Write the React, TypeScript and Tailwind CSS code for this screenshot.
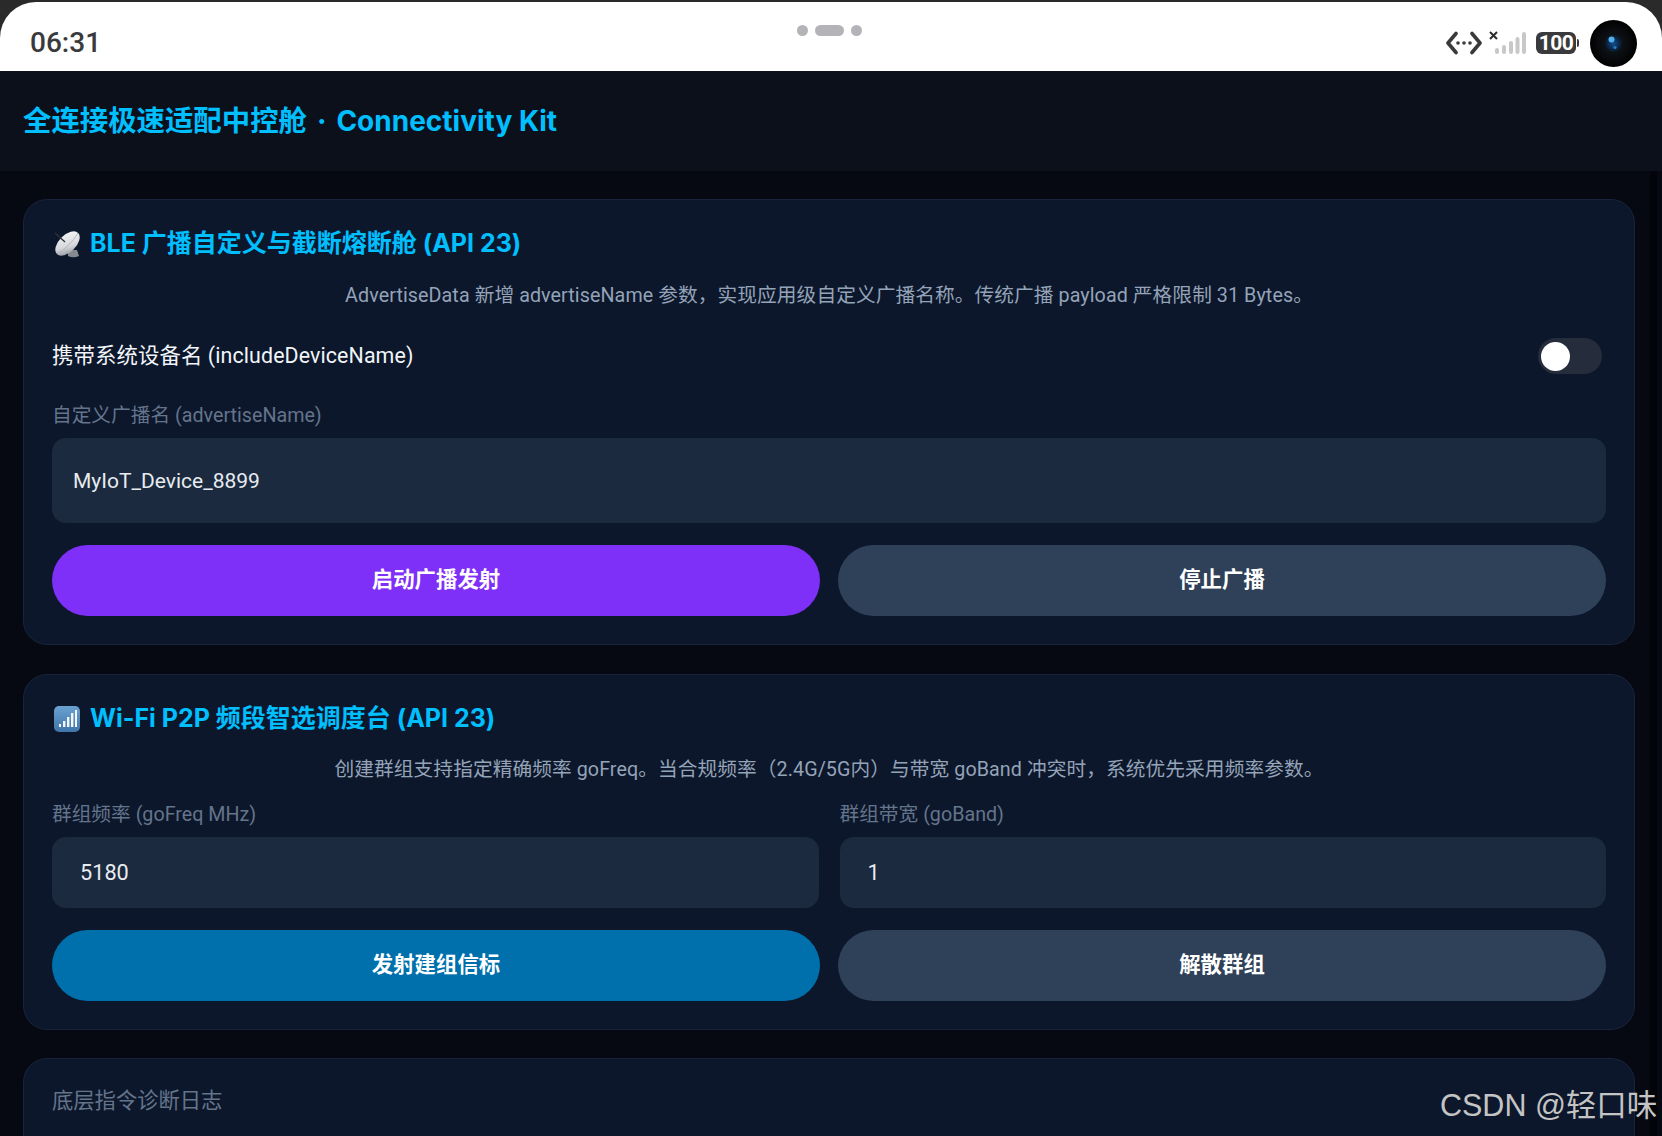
import { useState } from "react";

const uiFont = "font-['Roboto','Noto_Sans_CJK_SC',sans-serif]";
const headingFont = "font-['Inter','Noto_Sans_CJK_SC',sans-serif]";

function DishIcon() {
  return (
    <svg viewBox="0 0 28 28" className="h-[28px] w-[28px] shrink-0">
      <defs>
        <linearGradient id="dish" x1="0" y1="1" x2="1" y2="0">
          <stop offset="0" stopColor="#7f838a" />
          <stop offset="0.4" stopColor="#d6d8dc" />
          <stop offset="1" stopColor="#fbfbfb" />
        </linearGradient>
      </defs>
      <path d="M15 20 H24 L26 26 Q20.5 28.5 15 26 Z" fill="#858990" />
      <ellipse cx="14.5" cy="13.5" rx="15" ry="8.5" transform="rotate(-45 14.5 13.5)" fill="url(#dish)" />
      <path d="M4.5 23.5 C10 21 20 12 25 3" stroke="#a9acb2" strokeWidth="0.8" fill="none" />
      <path d="M2 3 L12 12" stroke="#2f3238" strokeWidth="1.4" />
    </svg>
  );
}

function SignalIcon() {
  return (
    <svg viewBox="0 0 28 28" className="h-[28px] w-[28px] shrink-0">
      <defs>
        <linearGradient id="tile" x1="0" y1="0" x2="0" y2="1">
          <stop offset="0" stopColor="#6aa2d2" />
          <stop offset="1" stopColor="#3f75a8" />
        </linearGradient>
      </defs>
      <rect x="1" y="1" width="26" height="26" rx="5" fill="url(#tile)" />
      <rect x="6" y="19" width="2" height="3" fill="#f4f7fa" />
      <rect x="10" y="16" width="2.4" height="6" fill="#f4f7fa" />
      <rect x="14" y="12" width="2.4" height="10" fill="#f4f7fa" />
      <rect x="18" y="8" width="2.4" height="14" fill="#f4f7fa" />
      <rect x="22" y="5" width="2" height="17" fill="#f4f7fa" />
    </svg>
  );
}

function StatusIcons() {
  return (
    <div className="flex items-center">
      <svg viewBox="0 0 36 24" className="h-[24px] w-[36px]">
        <path d="M10 2.5 L2 12 L10 21.5 M26 2.5 L34 12 L26 21.5" fill="none" stroke="#3a3a3c" strokeWidth="3.6" strokeLinecap="round" strokeLinejoin="round" />
        <circle cx="12" cy="12" r="1.8" fill="#3a3a3c" />
        <circle cx="18" cy="12" r="1.8" fill="#3a3a3c" />
        <circle cx="24" cy="12" r="1.8" fill="#3a3a3c" />
      </svg>
      <svg viewBox="0 0 38 24" className="ml-[7px] h-[24px] w-[38px]">
        <path d="M1 1 L8 8 M8 1 L1 8" stroke="#2c2c2e" strokeWidth="2" />
        <rect x="6" y="17" width="4" height="6" rx="2" fill="#c8c8ca" />
        <rect x="13" y="14" width="4" height="9" rx="2" fill="#c8c8ca" />
        <rect x="20" y="10" width="4" height="13" rx="2" fill="#c8c8ca" />
        <rect x="26.5" y="6" width="4" height="17" rx="2" fill="#c8c8ca" />
        <rect x="33" y="1" width="4" height="22" rx="2" fill="#c8c8ca" />
      </svg>
      <div className="ml-[9px] flex items-center">
        <div className="flex h-[22px] w-[40px] items-center justify-center rounded-[6px] bg-[#3a3a3c] text-[21px] leading-none font-bold tracking-[-0.5px] text-white">
          100
        </div>
        <div className="ml-[1px] h-[8px] w-[2px] rounded-r-sm bg-[#3a3a3c]" />
      </div>
      <svg viewBox="0 0 47 47" className="ml-[11px] h-[47px] w-[47px]">
        <defs>
          <radialGradient id="lens" cx="0.5" cy="0.5" r="0.5">
            <stop offset="0" stopColor="#14508f" />
            <stop offset="0.22" stopColor="#0a2c55" />
            <stop offset="0.38" stopColor="#0c1116" />
            <stop offset="0.7" stopColor="#08090b" />
            <stop offset="1" stopColor="#000000" />
          </radialGradient>
        </defs>
        <circle cx="23.5" cy="23.5" r="23.5" fill="url(#lens)" />
        <circle cx="21.5" cy="19.5" r="3" fill="#4fb2ee" />
        <circle cx="25" cy="27.5" r="1.6" fill="#2a7cc0" />
      </svg>
    </div>
  );
}

function Field({ label, value }: { label: string; value: string }) {
  return (
    <div className="min-w-0 flex-1">
      <div className="h-[30px] text-[19.7px] leading-[30px] text-[#64748b]">{label}</div>
      <input
        readOnly
        value={value}
        className="mt-[7px] block h-[71px] w-full rounded-[14px] bg-[#1b2a3e] px-[28px] text-[21.7px] text-[#e8ecf1] outline-none"
      />
    </div>
  );
}

function PillButton({ text, color }: { text: string; color: string }) {
  return (
    <button className={`h-[71px] flex-1 rounded-full text-[21.4px] font-bold text-white ${color}`}>
      {text}
    </button>
  );
}

function Card({ children }: { children: React.ReactNode }) {
  return (
    <section className="rounded-[24px] border border-[#17243b] bg-[#0c172b] px-[28px] pt-[7px] pb-[28px]">
      {children}
    </section>
  );
}

function CardTitle({ icon, text }: { icon: React.ReactNode; text: string }) {
  return (
    <h2 className={`flex h-[74px] items-center gap-[9px] pl-[1px] text-[25px] font-bold text-[#00bfff] ${headingFont}`}>
      {icon}
      <span>{text}</span>
    </h2>
  );
}

export default function App() {
  const [includeName, setIncludeName] = useState(false);

  return (
    <div className={`relative h-[1136px] w-[1662px] overflow-hidden bg-[#060912] ${uiFont}`}>
      <div className="bg-[#2a2a2a] pt-[2px]">
        <div className="relative flex h-[69px] items-center justify-between rounded-t-[36px] bg-white pt-[13px] pr-[25px] pl-[30px]">
          <span className="text-[28px] font-medium text-[#3a3a3c]">06:31</span>
          <div className="absolute top-[23px] left-[797px] flex items-center gap-[7px]">
            <span className="h-[11px] w-[11px] rounded-full bg-[#b4b4b8]" />
            <span className="h-[11px] w-[29px] rounded-full bg-[#b4b4b8]" />
            <span className="h-[11px] w-[11px] rounded-full bg-[#b4b4b8]" />
          </div>
          <StatusIcons />
        </div>
      </div>

      <header className="flex h-[100px] items-center bg-[#0b101b] pl-[23px]">
        <h1 className={`text-[28.4px] font-bold text-[#00bfff] ${headingFont}`}>
          全连接极速适配中控舱<span className="mx-[10px]">·</span><span className="text-[28px]">Connectivity Kit</span>
        </h1>
      </header>

      <main className="flex flex-col pt-[28px] pr-[27px] pl-[23px]">
        <Card>
          <CardTitle icon={<DishIcon />} text="BLE 广播自定义与截断熔断舱 (API 23)" />
          <p className="mt-[1px] h-[28px] text-center text-[19.7px] leading-[28px] tracking-[0.08px] text-[#94a3b8]">
            AdvertiseData 新增 advertiseName 参数，实现应用级自定义广播名称。传统广播 payload 严格限制 31 Bytes。
          </p>
          <div className="mt-[28px] flex h-[36px] items-center justify-between pr-[4px]">
            <span className="text-[21.4px] tracking-[0.1px] text-[#f1f5f9]">携带系统设备名 (includeDeviceName)</span>
            <button
              onClick={() => setIncludeName(!includeName)}
              className={`flex h-[36px] w-[64px] items-center rounded-full bg-[#252c3c] px-[3px] ${includeName ? "justify-end" : "justify-start"}`}
            >
              <span className="h-[29px] w-[29px] rounded-full bg-white" />
            </button>
          </div>
          <div className="mt-[27px] h-[30px] text-[19.7px] leading-[30px] text-[#64748b]">自定义广播名 (advertiseName)</div>
          <input
            readOnly
            value="MyIoT_Device_8899"
            className="mt-[7px] block h-[85px] w-full rounded-[14px] bg-[#1b2a3e] px-[21px] text-[21px] text-[#e8ecf1] outline-none"
          />
          <div className="mt-[22px] flex gap-[18px]">
            <PillButton text="启动广播发射" color="bg-[#7f30f8]" />
            <PillButton text="停止广播" color="bg-[#2f4159]" />
          </div>
        </Card>

        <div className="mt-[29px]">
          <Card>
            <CardTitle icon={<SignalIcon />} text="Wi-Fi P2P 频段智选调度台 (API 23)" />
            <p className="h-[28px] text-center text-[19.7px] leading-[28px] tracking-[0.08px] text-[#94a3b8]">
              创建群组支持指定精确频率 goFreq。当合规频率（2.4G/5G内）与带宽 goBand 冲突时，系统优先采用频率参数。
            </p>
            <div className="mt-[16px] flex gap-[21px]">
              <Field label="群组频率 (goFreq MHz)" value="5180" />
              <Field label="群组带宽 (goBand)" value="1" />
            </div>
            <div className="mt-[22px] flex gap-[18px]">
              <PillButton text="发射建组信标" color="bg-[#0070ad]" />
              <PillButton text="解散群组" color="bg-[#2f4159]" />
            </div>
          </Card>
        </div>

        <div className="mt-[28px]">
          <Card>
            <h2 className="flex h-[69px] items-center text-[21.3px] text-[#64748b]">底层指令诊断日志</h2>
          </Card>
        </div>
      </main>

      {/* darker strip down the right edge of the window */}
      <div className="absolute top-[171px] right-[5px] bottom-0 w-[7px] bg-[#030409]" />

      <div className="absolute top-[1085px] left-[1440px] font-['Liberation_Sans','Noto_Sans_CJK_SC',sans-serif] text-[30.5px] leading-[40px] whitespace-nowrap text-[#c4c4c4]">
        CSDN @轻口味
      </div>
    </div>
  );
}
